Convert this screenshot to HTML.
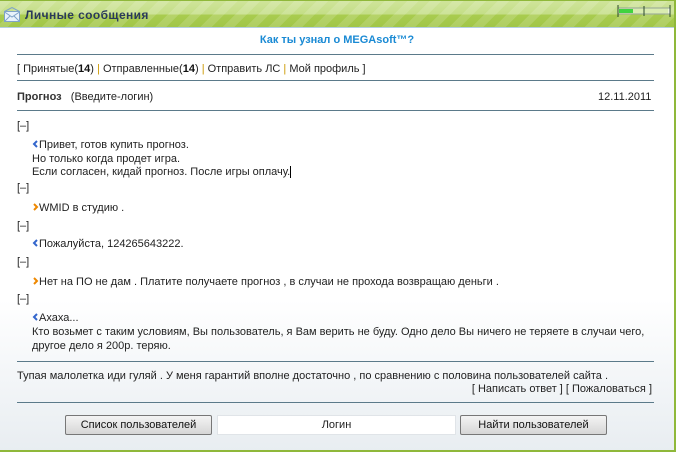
<!DOCTYPE html>
<html><head><meta charset="utf-8"><style>
*{margin:0;padding:0;box-sizing:border-box}
body{width:676px;height:452px;overflow:hidden;font-family:Tahoma,"Liberation Sans","DejaVu Sans",sans-serif;font-size:11px;color:#222;background:#fff;position:relative}
.wrap{position:absolute;left:0;top:0;width:676px;height:452px;border-right:2px solid #8fb83a;border-bottom:2px solid #8fb83a;background:linear-gradient(#fff 0,#fff 300px,#e8edf1 452px)}
.hdr{position:absolute;left:0;top:0;width:674px;height:28px;border-top:1px solid #8fb83a;background:repeating-linear-gradient(135deg,rgba(255,255,255,.15) 0 8px,rgba(255,255,255,0) 8px 16px),linear-gradient(#cfe49a 0,#c4de87 13px,#a9cc4f 14px,#9fc546 28px);border-bottom:1px solid #b5cfe0}
.hdr .t{position:absolute;left:25px;top:7px;font-weight:bold;font-size:12px;color:#2a3a5a;letter-spacing:.4px}
.a{position:absolute;white-space:nowrap}
.ln{position:absolute;left:17px;width:637px;height:1px;background:#5b7a8a}
b{color:#111}
.btn{position:absolute;top:415px;height:20px;border:1px solid #777;border-radius:2px;background:linear-gradient(#f4f4f4,#d6d6d6);text-align:center;line-height:18px;color:#111}
.arr{display:inline-block;width:7px;vertical-align:0}
</style></head><body><div class="wrap">
<div class="hdr">
<svg style="position:absolute;left:4px;top:6px" width="16" height="15"><rect x="0.5" y="4.5" width="15" height="10" fill="#e8f2fb" stroke="#7fa3c8"/><path d="M0.5 4.5 L8 0.5 L15.5 4.5 M0.5 14.5 L6 9 M15.5 14.5 L10 9 M0.5 5 L8 10 L15.5 5" fill="none" stroke="#7fa3c8"/></svg>
<span class="t">Личные сообщения</span>
<svg style="position:absolute;left:617px;top:4px" width="54" height="12"><rect x="1" y="3" width="51" height="6" fill="#d9ecb0" stroke="#fff" stroke-width="1"/><rect x="2" y="4" width="14" height="4" fill="#3fd33f"/><path d="M1 0V12M53 0V12M27 1V11" stroke="#2a4a2a" stroke-width="1"/><path d="M1 3H53M1 9H53" stroke="#2a4a2a" stroke-width="0.6"/></svg>
</div>
<div class="a" style="left:0;width:674px;text-align:center;top:34px;color:#1a8ad4;font-weight:bold;font-size:11px">Как ты узнал о MEGAsoft™?</div>
<div class="ln" style="top:54px"></div>
<div class="a" style="left:17px;top:63px">[ Принятые(<b>14</b>) <span style="color:#c90">|</span> Отправленные(<b>14</b>) <span style="color:#c90">|</span> Отправить ЛС <span style="color:#c90">|</span> Мой профиль ]</div>
<div class="ln" style="top:80px"></div>
<div class="a" style="left:17px;top:91px"><b style="color:#333">Прогноз</b>&nbsp;&nbsp; (Введите-логин)</div>
<div class="a" style="left:598px;top:91px">12.11.2011</div>
<div class="ln" style="top:110px"></div>
<div class="a" style="left:17px;top:120px">[–]</div>
<div class="a" style="left:32px;top:139px;line-height:13.5px"><svg class="arr" width="7" height="8"><path d="M5 1L2 4L5 7" fill="none" stroke="#36c" stroke-width="2"/></svg>Привет, готов купить прогноз.<br>Но только когда продет игра.<br>Если согласен, кидай прогноз. После игры оплачу. <span style="border-left:1px solid #000"></span></div>
<div class="a" style="left:17px;top:182px">[–]</div>
<div class="a" style="left:32px;top:202px"><svg class="arr" width="7" height="8"><path d="M2 1L5 4L2 7" fill="none" stroke="#e80" stroke-width="2"/></svg>WMID в студию .</div>
<div class="a" style="left:17px;top:220px">[–]</div>
<div class="a" style="left:32px;top:238px"><svg class="arr" width="7" height="8"><path d="M5 1L2 4L5 7" fill="none" stroke="#36c" stroke-width="2"/></svg>Пожалуйста, 124265643222.</div>
<div class="a" style="left:17px;top:256px">[–]</div>
<div class="a" style="left:32px;top:276px"><svg class="arr" width="7" height="8"><path d="M2 1L5 4L2 7" fill="none" stroke="#e80" stroke-width="2"/></svg>Нет на ПО не дам . Платите получаете прогноз , в случаи не прохода возвращаю деньги .</div>
<div class="a" style="left:17px;top:293px">[–]</div>
<div class="a" style="left:32px;top:311px;line-height:14px"><svg class="arr" width="7" height="8"><path d="M5 1L2 4L5 7" fill="none" stroke="#36c" stroke-width="2"/></svg>Ахаха...<br>Кто возьмет с таким условиям, Вы пользователь, я Вам верить не буду. Одно дело Вы ничего не теряете в случаи чего,<br>другое дело я 200р. теряю.</div>
<div class="ln" style="top:361px"></div>
<div class="a" style="left:17px;top:370px">Тупая малолетка иди гуляй . У меня гарантий вполне достаточно , по сравнению с половина пользователей сайта .</div>
<div class="a" style="right:22px;top:383px">[ Написать ответ ] [ Пожаловаться ]</div>
<div class="ln" style="top:402px"></div>
<div class="btn" style="left:65px;width:147px">Список пользователей</div>
<div class="a" style="left:217px;top:415px;width:239px;height:20px;background:#fff;border:1px solid #e0e4e8;text-align:center;line-height:18px">Логин</div>
<div class="btn" style="left:460px;width:147px">Найти пользователей</div>
</div></body></html>
